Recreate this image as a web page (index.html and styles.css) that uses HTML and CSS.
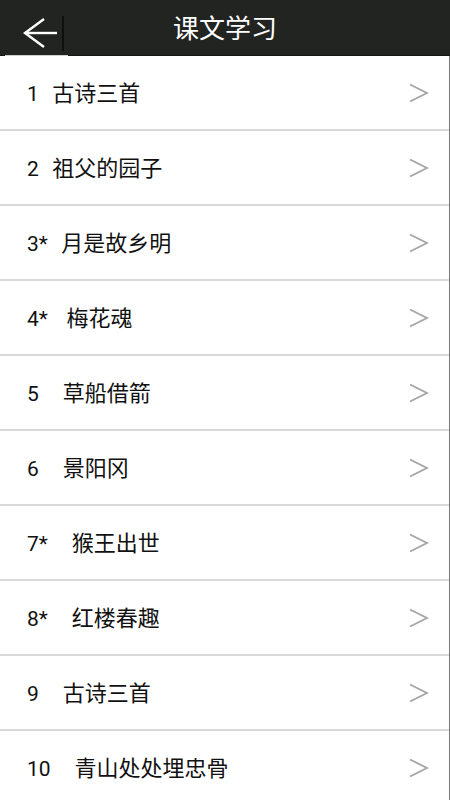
FILE: index.html
```html
<!DOCTYPE html>
<html lang="zh-CN">
<head>
  <meta charset="UTF-8">
  <meta name="viewport" content="width=device-width, initial-scale=1.0">
  <title>课文学习</title>
  <link rel="stylesheet" href="styles.css">
</head>
<body>
  <div class="header">
    <div class="back">
      <svg width="40" height="40" viewBox="0 0 40 40">
        <polyline points="22,5 3,19 22,33" />
        <line x1="3" y1="19" x2="35" y2="19" />
      </svg>
    </div>
    <h1>课文学习</h1>
  </div>

  <ul class="list">
    <li><p><span class="num">1  </span><span class="name">古诗三首</span></p><svg class="arrow" viewBox="0 0 20 20"><polyline points="1,1.5 18,10 1,18.5" /></svg></li>
    <li><p><span class="num">2  </span><span class="name">祖父的园子</span></p><svg class="arrow" viewBox="0 0 20 20"><polyline points="1,1.5 18,10 1,18.5" /></svg></li>
    <li><p><span class="num">3*  </span><span class="name">月是故乡明</span></p><svg class="arrow" viewBox="0 0 20 20"><polyline points="1,1.5 18,10 1,18.5" /></svg></li>
    <li><p><span class="num">4*   </span><span class="name">梅花魂</span></p><svg class="arrow" viewBox="0 0 20 20"><polyline points="1,1.5 18,10 1,18.5" /></svg></li>
    <li><p><span class="num">5    </span><span class="name">草船借箭</span></p><svg class="arrow" viewBox="0 0 20 20"><polyline points="1,1.5 18,10 1,18.5" /></svg></li>
    <li><p><span class="num">6    </span><span class="name">景阳冈</span></p><svg class="arrow" viewBox="0 0 20 20"><polyline points="1,1.5 18,10 1,18.5" /></svg></li>
    <li><p><span class="num">7*    </span><span class="name">猴王出世</span></p><svg class="arrow" viewBox="0 0 20 20"><polyline points="1,1.5 18,10 1,18.5" /></svg></li>
    <li><p><span class="num">8*    </span><span class="name">红楼春趣</span></p><svg class="arrow" viewBox="0 0 20 20"><polyline points="1,1.5 18,10 1,18.5" /></svg></li>
    <li><p><span class="num">9    </span><span class="name">古诗三首</span></p><svg class="arrow" viewBox="0 0 20 20"><polyline points="1,1.5 18,10 1,18.5" /></svg></li>
    <li><p><span class="num">10    </span><span class="name">青山处处埋忠骨</span></p><svg class="arrow" viewBox="0 0 20 20"><polyline points="1,1.5 18,10 1,18.5" /></svg></li>
  </ul>
</body>
</html>
```

FILE: styles.css
```css
/* Basic Reset */
* {
  margin: 0;
  padding: 0;
  box-sizing: border-box;
}

body {
  background: #fff;
  font-family: Roboto, "Noto Sans CJK SC", sans-serif;
  color: #111;
  overflow: hidden;
}

/* Top bar */
.header {
  position: relative;
  height: 56px;
  background: #222422;
  border-bottom: 1px solid #141514;
  display: flex;
  align-items: center;
  justify-content: center;
}

.back {
  position: absolute;
  left: 5px;
  top: 0;
  width: 63px;
  height: 56px;
  border-bottom: 1px solid #d0d0d0;
  padding: 14px 0 0 17px;
}

.back::after {
  content: "";
  position: absolute;
  left: 57px;
  top: 16px;
  width: 2px;
  height: 35px;
  background: #0e0f0e;
}

.back svg {
  display: block;
  fill: none;
  stroke: #fff;
  stroke-width: 2.4;
}

.header h1 {
  color: #fff;
  font-family: "Noto Sans CJK SC", sans-serif;
  font-weight: normal;
  font-size: 26px;
  margin-top: -3px;
}

/* Lesson list */
.list {
  list-style: none;
  border-right: 1px solid #7a7a7a;
  min-height: 744px;
}

.list li {
  position: relative;
  height: 75px;
  border-bottom: 2px solid #d9d9d9;
  display: flex;
  align-items: center;
  padding-left: 27px;
  padding-bottom: 3px;
}

.num {
  font-size: 21px;
  white-space: pre;
  margin-right: 3px;
}

.name {
  font-family: "Noto Sans CJK SC", sans-serif;
  font-size: 22px;
}

.arrow {
  position: absolute;
  right: 20px;
  top: 27px;
  width: 20px;
  height: 20px;
  fill: none;
  stroke: #a4a4a4;
  stroke-width: 1.8;
}
```
